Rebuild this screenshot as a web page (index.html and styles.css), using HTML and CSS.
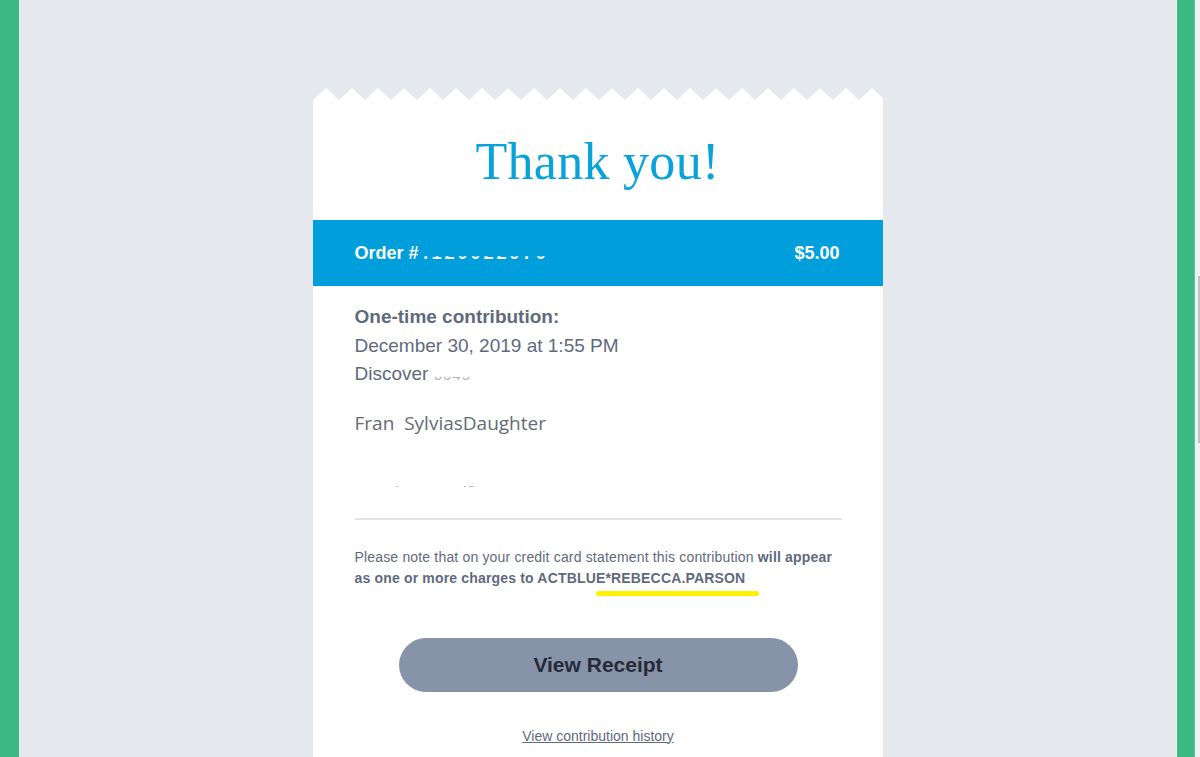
FILE: index.html
```html
<!DOCTYPE html>
<html lang="en">
<head>
<meta charset="utf-8">
<title>Thank you!</title>
<link rel="stylesheet" href="styles.css">
</head>
<body>
<div class="frame">
  <div class="green-left"></div>
  <main class="stage">
    <div class="receipt">
      <svg class="zigzag" width="570" height="12" viewBox="0 0 570 12" preserveAspectRatio="none" aria-hidden="true">
        <defs>
          <pattern id="teeth" width="26" height="12" patternUnits="userSpaceOnUse">
            <polygon points="0,12 13,0 26,12" fill="#ffffff"/>
          </pattern>
        </defs>
        <rect x="0" y="0" width="570" height="12" fill="url(#teeth)"/>
      </svg>
      <div class="paper">
        <h1 class="title">Thank you!</h1>
        <div class="order-bar">
          <span class="order-no">Order #<span class="clip clip-white">4120022970</span></span>
          <span class="amount">$5.00</span>
        </div>
        <div class="details">
          <p class="line strong">One-time contribution:</p>
          <p class="line">December 30, 2019 at 1:55 PM</p>
          <p class="line">Discover <span class="clip clip-grey">6045</span></p>
          <p class="name">Fran&nbsp; SylviasDaughter</p>
          <p class="redacted"><span class="speck s1"></span><span class="speck s2"></span><span class="speck s3"></span></p>
          <hr class="rule">
          <p class="note">Please note that on your credit card statement this contribution <b>will appear as one or more charges to ACTBLUE<span class="hl">*REBECCA.PARSON</span></b></p>
          <div class="actions">
            <a class="btn" href="#">View Receipt</a>
            <a class="history" href="#">View contribution history</a>
          </div>
        </div>
      </div>
    </div>
  </main>
  <div class="edge-line"></div>
  <div class="green-right"></div>
  <div class="scroll"><div class="thumb"></div></div>
</div>
</body>
</html>
```

FILE: styles.css
```css
* { box-sizing: border-box; }
html, body { margin: 0; padding: 0; height: 100%; overflow: hidden; }
body {
  font-family: "Liberation Sans", Arial, sans-serif;
  background: #e5e8ed;
}
.frame {
  display: flex;
  height: 757px;
  width: 1200px;
}
.green-left { width: 19px; flex: none; background: #3cb883; }
.stage {
  flex: 1;
  background: #e5e8ed;
  display: flex;
  justify-content: center;
  align-items: flex-start;
  padding-top: 88px;
  overflow: hidden;
}
.edge-line { width: 1px; flex: none; background: #f4f6f7; }
.green-right { width: 18px; flex: none; background: #3cb883; border-right: 1px solid #4fcb93; }
.scroll { width: 5px; flex: none; background: #f1f1f1; position: relative; }
.thumb { position: absolute; right: 0; top: 276px; width: 2px; height: 167px; background: #c1c1c1; }

.receipt { width: 570px; flex: none; }
.zigzag { display: block; width: 570px; height: 12px; }
.paper { background: #ffffff; padding-bottom: 40px; }

.title {
  margin: 0;
  height: 120px;
  padding-top: 32px;
  text-align: center;
  font-family: "Liberation Serif", "Times New Roman", serif;
  font-weight: 400;
  font-size: 52px;
  line-height: 60px;
  color: #0aa2db;
  letter-spacing: 0.3px;
}

.order-bar {
  height: 66px;
  background: #009fdc;
  color: #ffffff;
  display: flex;
  justify-content: space-between;
  align-items: center;
  padding: 0 43px 0 42px;
  font-weight: 700;
  font-size: 18px;
}
.clip { display: inline-block; }
.clip-white { color: #ffffff; clip-path: inset(66% 0 0 0); letter-spacing: 3px; }
.clip-grey { color: #aeb5c0; clip-path: inset(55% 0 0 0); font-size: 15px; letter-spacing: 1px; }

.details {
  padding: 17px 41px 0 42px;
  color: #5f6a7d;
}
.line {
  margin: 0;
  font-size: 19px;
  line-height: 28.5px;
}
.strong { font-weight: 700; }
.name {
  margin: 19px 0 0;
  font-family: "Open Sans", "Noto Sans", sans-serif;
  font-size: 19px;
  line-height: 28px;
  color: #646b75;
}
.redacted {
  margin: 0;
  height: 81px;
  display: flex;
  align-items: center;
  padding-top: 18px;
}
.speck { display: inline-block; height: 1px; background: #b7bccb; }
.s1 { width: 2px; margin-left: 41px; }
.s2 { width: 2px; margin-left: 66px; }
.s3 { width: 5px; margin-left: 3px; }

.rule {
  margin: 0;
  border: 0;
  height: 2px;
  background: #e1e4e9;
}
.note {
  margin: 27px 0 0;
  max-width: 480px;
  font-size: 14px;
  line-height: 21px;
  letter-spacing: 0.17px;
  color: #5f6a7d;
}
.note b { font-weight: 700; }
.hl { position: relative; }
.hl::after {
  content: "";
  position: absolute;
  left: -9px;
  right: -14px;
  bottom: -10px;
  height: 5px;
  border-radius: 3px;
  background: #fff200;
}

.actions {
  display: flex;
  flex-direction: column;
  align-items: center;
  padding-top: 49px;
}
.btn {
  width: 399px;
  height: 54px;
  border-radius: 27px;
  background: #8793a8;
  color: #272a38;
  font-weight: 700;
  font-size: 21px;
  text-decoration: none;
  display: flex;
  align-items: center;
  justify-content: center;
}
.history {
  margin-top: 34px;
  font-size: 14px;
  line-height: 20px;
  color: #5f6a7d;
  text-decoration: underline;
}
```
